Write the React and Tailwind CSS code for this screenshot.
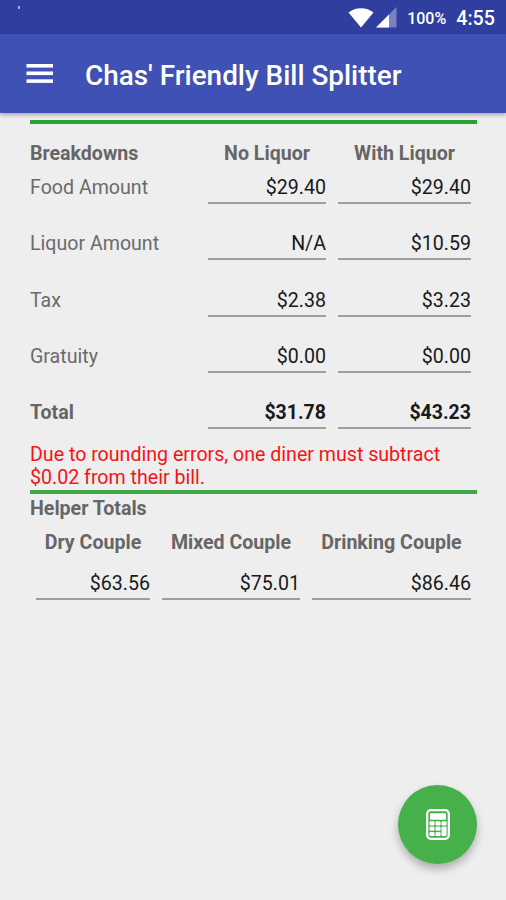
const breakdowns = [
  { label: 'Food Amount', dry: '$29.40', wet: '$29.40' },
  { label: 'Liquor Amount', dry: 'N/A', wet: '$10.59' },
  { label: 'Tax', dry: '$2.38', wet: '$3.23' },
  { label: 'Gratuity', dry: '$0.00', wet: '$0.00' },
  { label: 'Total', dry: '$31.78', wet: '$43.23', bold: true }
];

const helpers = [
  { label: 'Dry Couple', value: '$63.56' },
  { label: 'Mixed Couple', value: '$75.01' },
  { label: 'Drinking Couple', value: '$86.46' }
];

function StatusBar() {
  return (
    <div className="relative flex h-[34px] items-center justify-end bg-[#303f9f] pr-[11px] text-white">
      <span className="absolute left-[18px] top-[6px] h-[3px] w-[2px] bg-[#a3abd8]" />
      <span className="absolute left-[54px] top-[25px] h-[2px] w-[2px] bg-[#2b3a80]" />
      <span className="absolute left-[60px] top-[25px] h-[2px] w-[2px] bg-[#2b3a80]" />
      <svg width="26" height="20" viewBox="0 0 26 20" className="mr-[2px] mt-[2px]">
        <path d="M13 19.5 0.5 4.4C4 1.7 8.3 0.2 13 0.2s9 1.5 12.5 4.2z" fill="#fff" />
      </svg>
      <svg width="21" height="21" viewBox="0 0 21 21" className="mr-[10px] mt-[1px]">
        <path d="M0 20.5 20.5 0v20.5z" fill="#fff" opacity="0.35" />
        <path d="M0 20.5 13 7.5v13z" fill="#fff" />
      </svg>
      <span className="mr-[10px] mt-[2px] text-[16px] font-medium">100%</span>
      <span className="mt-[2px] text-[19.7px] font-medium">4:55</span>
    </div>
  );
}

function Toolbar() {
  return (
    <header className="relative flex h-[79px] items-center bg-[#3f51b5] pl-[26px] shadow-[0_2px_4px_rgba(0,0,0,0.3)]">
      <button type="button" aria-label="Menu" className="mr-[32px]">
        <svg width="27" height="20" viewBox="0 0 27 20" fill="#fff" className="block">
          <rect x="0.5" y="0" width="26.5" height="3.6" />
          <rect x="0.5" y="7.5" width="26.5" height="3.6" />
          <rect x="0.5" y="15.3" width="26.5" height="3.6" />
        </svg>
      </button>
      <h1 className="mt-[3px] text-[27.9px] font-medium text-white">Chas' Friendly Bill Splitter</h1>
    </header>
  );
}

function Field({ value, bold }) {
  return (
    <div
      className={`mx-[6px] h-[28px] border-b-2 border-[#9e9e9e] text-right leading-[23px] text-[#191919] ${
        bold ? 'text-[19.5px] font-bold' : ''
      }`}
    >
      {value}
    </div>
  );
}

function Calculator() {
  return (
    <svg width="24" height="31" viewBox="0 0 24 31">
      <rect x="1.2" y="1.2" width="21.6" height="28.6" rx="3.5" fill="none" stroke="#fff" strokeWidth="2.2" />
      <rect x="4" y="4.2" width="16" height="6.6" rx="1" fill="#fff" />
      <g fill="#fff">
        <rect x="3.5" y="12.2" width="5.1" height="4.2" rx="1.2" />
        <rect x="9.5" y="12.2" width="5.1" height="4.2" rx="1.2" />
        <rect x="15.5" y="12.2" width="5.1" height="4.2" rx="1.2" />
        <rect x="3.5" y="17.5" width="5.1" height="4.2" rx="1.2" />
        <rect x="9.5" y="17.5" width="5.1" height="4.2" rx="1.2" />
        <rect x="15.5" y="17.5" width="5.1" height="9.6" rx="1.2" />
        <rect x="3.5" y="22.9" width="5.1" height="4.2" rx="1.2" />
        <rect x="9.5" y="22.9" width="5.1" height="4.2" rx="1.2" />
      </g>
    </svg>
  );
}

export default function App() {
  return (
    <div className="relative h-[900px] w-full overflow-hidden bg-[#eeeeee] font-['Roboto',sans-serif] text-[19.6px] leading-[23px] text-[#6b6b6b]">
      <StatusBar />
      <Toolbar />

      <main className="ml-[30px] w-[447px] pt-[7px]">
        <div className="h-[4px] bg-[#2ba12f]" />

        <div className="mt-[18px] grid grid-cols-[172px_130px_145px] font-bold text-[#666666]">
          <div>Breakdowns</div>
          <div className="text-center">No Liquor</div>
          <div className="text-center">With Liquor</div>
        </div>

        <div className="pt-[11px]">
          {breakdowns.map((row) => (
            <div key={row.label} className="grid h-[56.25px] grid-cols-[172px_130px_145px]">
              <div className={row.bold ? 'font-bold text-[#666666]' : ''}>{row.label}</div>
              <Field value={row.dry} bold={row.bold} />
              <Field value={row.wet} bold={row.bold} />
            </div>
          ))}
        </div>

        <p className="-mt-[14px] text-[#f51414]">
          Due to rounding errors, one diner must subtract $0.02 from their bill.
        </p>
        <div className="mt-[1px] h-[4px] bg-[#3fa846]" />

        <h2 className="mt-[3px] font-bold text-[#666666]">Helper Totals</h2>
        <div className="mt-[11px] grid grid-cols-[126px_150px_171px]">
          {helpers.map((item) => (
            <div key={item.label}>
              <div className="mb-[18px] text-center font-bold text-[#666666]">{item.label}</div>
              <Field value={item.value} />
            </div>
          ))}
        </div>
      </main>

      <button
        type="button"
        aria-label="Calculate"
        className="absolute left-[398px] top-[785px] flex h-[79px] w-[79px] items-center justify-center rounded-full bg-[#46b04b] shadow-[0_5px_8px_rgba(0,0,0,0.28)]"
      >
        <Calculator />
      </button>
    </div>
  );
}
